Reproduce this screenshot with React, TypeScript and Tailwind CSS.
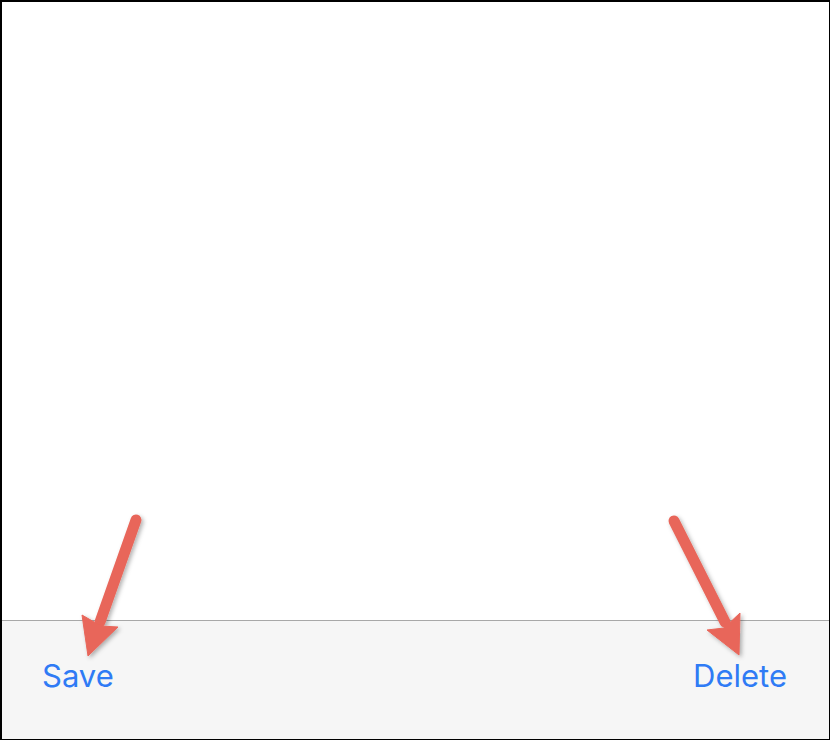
import React from "react";

export default function App() {
  return (
    <div className="relative w-[830px] h-[740px] bg-white border-black border-t-[2px] border-l-[2px] border-r border-b flex flex-col overflow-hidden" style={{ fontFamily: "Inter, 'Noto Sans', sans-serif" }}>
      <div className="flex-1 bg-white" />
      <div className="h-[119px] bg-[#f6f6f6] border-t border-[#a8a8a8] flex items-center justify-between pl-[40px] pr-[42px] pb-[10px]">
        <span className="text-[31px] text-[#2f7bf5] leading-none">Save</span>
        <span className="text-[31px] text-[#2f7bf5] leading-none">Delete</span>
      </div>
      <svg className="absolute left-0 top-0 pointer-events-none" width="830" height="740" viewBox="0 0 830 740">
        <defs>
          <filter id="sh" x="-20%" y="-20%" width="140%" height="140%">
            <feDropShadow dx="2" dy="2" stdDeviation="2" floodColor="#000" floodOpacity="0.3" />
          </filter>
        </defs>
        <g filter="url(#sh)" fill="#e8665a" stroke="#e8665a">
          <line x1="134" y1="518" x2="98" y2="620" strokeWidth="11" strokeLinecap="round" />
          <polygon points="86,654 80,613 99,624 116,625" strokeWidth="1" strokeLinejoin="round" />
          <line x1="672" y1="519" x2="723" y2="620" strokeWidth="11" strokeLinecap="round" />
          <polygon points="737,653 705,628 722,626 738,611" strokeWidth="1" strokeLinejoin="round" />
        </g>
      </svg>
    </div>
  );
}
